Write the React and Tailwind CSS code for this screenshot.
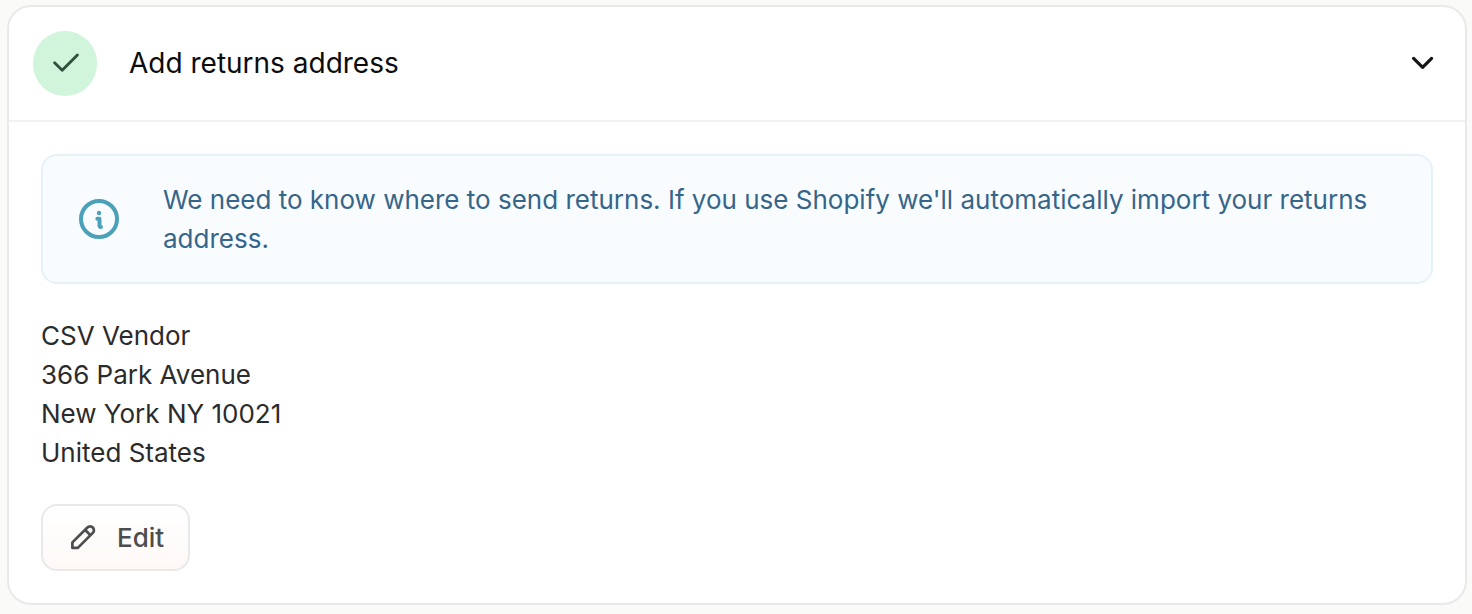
import React from 'react';

const addressLines = ['CSV Vendor', '366 Park Avenue', 'New York NY 10021', 'United States'];

function CheckIcon() {
  return (
    <svg className="h-8 w-8" viewBox="0 0 32 32" fill="none" stroke="currentColor" strokeWidth="2.9" strokeLinecap="round" strokeLinejoin="round" aria-hidden="true">
      <path d="M5.6 14.8 L13.2 22.2 L28.4 7" />
    </svg>
  );
}

function ChevronIcon() {
  return (
    <svg className="h-8 w-8" viewBox="0 0 32 32" fill="none" stroke="currentColor" strokeWidth="3.2" strokeLinecap="round" strokeLinejoin="round" aria-hidden="true">
      <path d="M6.6 10.4 L15.6 19.3 L24.6 10.4" />
    </svg>
  );
}

function InfoIcon() {
  return (
    <svg className="h-10 w-10 shrink-0" viewBox="0 0 40 40" fill="none" stroke="currentColor" strokeLinecap="round" strokeLinejoin="round" aria-hidden="true">
      <circle cx="20" cy="20" r="18" strokeWidth="4" />
      <circle cx="20" cy="14" r="2.2" fill="currentColor" stroke="none" />
      <path d="M18.3 19.7 H20.5 V26.6 Q20.5 28 22 28" strokeWidth="3.9" />
    </svg>
  );
}

function PencilIcon() {
  return (
    <svg className="h-7 w-7" viewBox="0 0 28 28" fill="none" stroke="currentColor" strokeWidth="2.7" strokeLinejoin="round" aria-hidden="true">
      <path d="M3.4 23.9 V18.4 L18.4 3.5 A3.8 3.8 0 0 1 23.8 8.9 L8.8 23.9 Z" />
      <path d="M16 5.8 L21.4 11.2" />
    </svg>
  );
}

export default function App() {
  return (
    <main className="min-h-screen bg-[#fafaf8] pt-[5px] pr-[5px] pb-[9px] pl-[7px] font-['Inter',sans-serif] text-[26px] leading-[39px] text-[#2b2b2b]">
      <section className="rounded-3xl border-2 border-[#e9e9e9] bg-white">
        <header className="flex items-center gap-8 border-b-2 border-[#f1f1f1] py-6 pr-[26px] pl-6">
          <span className="flex h-[65px] w-16 shrink-0 items-center justify-center rounded-full bg-[#d0f5da] text-[#304f3e]">
            <CheckIcon />
          </span>
          <h2 className="flex-1 text-[28px] text-[#0c0c0c]">Add returns address</h2>
          <button type="button" aria-label="Toggle returns address" aria-expanded="true" className="text-[#151515]">
            <ChevronIcon />
          </button>
        </header>
        <div className="flex flex-col items-start gap-8 p-8">
          <div className="flex w-full items-center gap-11 rounded-2xl border-2 border-[#e6f2f7] bg-[#f9fcff] py-6 pr-6 pl-9 text-[#4ba1b8]">
            <InfoIcon />
            <p className="text-[#36658a]">
              We need to know where to send returns. If you use Shopify we'll automatically import your returns address.
            </p>
          </div>
          <address className="not-italic">
            {addressLines.map((line) => (
              <div key={line}>{line}</div>
            ))}
          </address>
          <button type="button" className="flex items-center gap-5 rounded-2xl border-2 border-[#e9e9e9] bg-linear-to-b from-white to-[#fdf9f7] py-3 pr-6 pl-[26px] font-medium text-[#4d4d4d]">
            <PencilIcon />
            Edit
          </button>
        </div>
      </section>
    </main>
  );
}
